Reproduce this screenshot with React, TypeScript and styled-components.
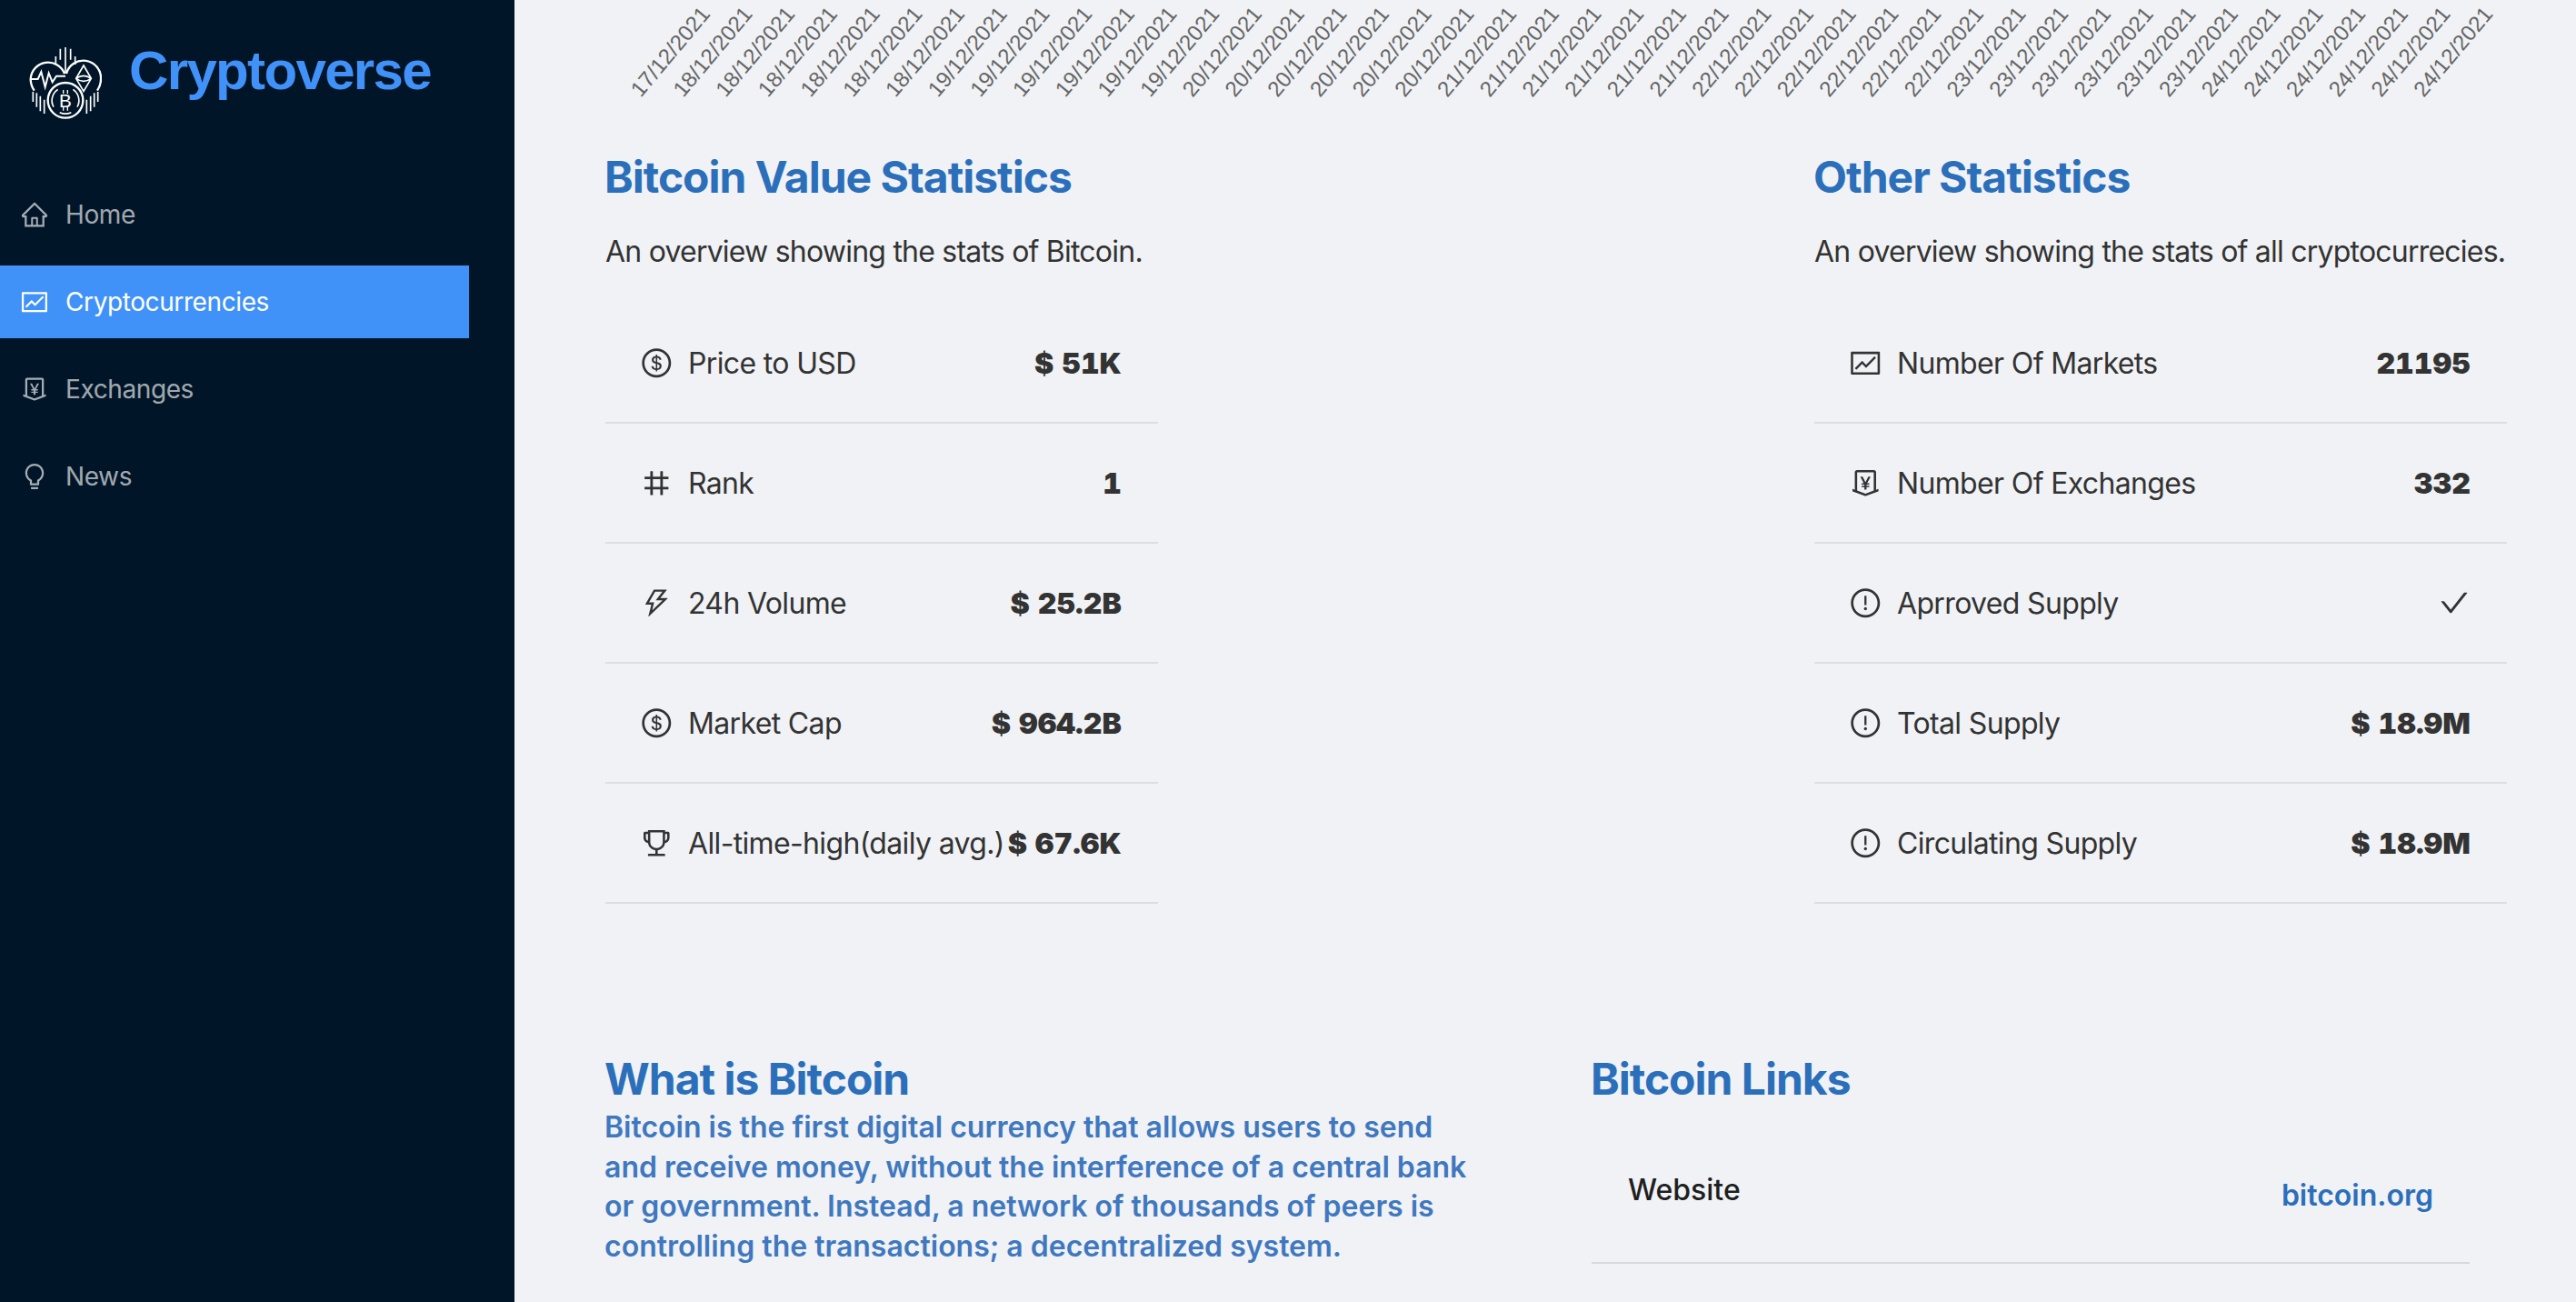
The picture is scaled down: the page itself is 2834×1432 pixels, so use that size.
import React from "react";
import styled, { createGlobalStyle } from "styled-components";
import {
  AiOutlineBulb,
  AiOutlineCheck,
  AiOutlineDollarCircle,
  AiOutlineExclamationCircle,
  AiOutlineFund,
  AiOutlineHome,
  AiOutlineMoneyCollect,
  AiOutlineNumber,
  AiOutlineThunderbolt,
  AiOutlineTrophy,
} from "react-icons/ai";

const GlobalStyle = createGlobalStyle`
  html, body {
    margin: 0;
    height: 100%;
    overflow: hidden;
    background: #f0f2f5;
  }
  * {
    box-sizing: border-box;
  }
`;

const Layout = styled.div`
  display: flex;
  width: 2834px;
  height: 1432px;
  overflow: hidden;
  font-family: Inter, "Liberation Sans", sans-serif;
`;

const Sidebar = styled.aside`
  flex: 0 0 566px;
  background: #011528;
`;

const Brand = styled.div`
  display: flex;
  align-items: flex-start;
  height: 196px;
  padding: 52px 0 0 32px;
  gap: 30px;
`;

const BrandName = styled.div`
  font-family: "Liberation Sans", Arial, sans-serif;
  font-size: 60px;
  font-weight: 700;
  line-height: 52px;
  color: #4092f9;
  letter-spacing: -1.65px;
`;

const Nav = styled.nav`
  display: flex;
  flex-direction: column;
  gap: 16px;
  width: 516px;
`;

const NavItem = styled.div<{ $active?: boolean }>`
  display: flex;
  align-items: center;
  gap: 20px;
  height: 80px;
  padding-left: 24px;
  font-size: 28px;
  letter-spacing: -0.4px;
  color: ${({ $active }) => ($active ? "#fff" : "rgba(255, 255, 255, 0.65)")};
  background: ${({ $active }) => ($active ? "#4092f9" : "transparent")};
`;

const IconSlot = styled.span<{ $size: number }>`
  display: flex;
  flex: none;
  align-items: center;
  justify-content: center;
  width: ${({ $size }) => $size}px;
  height: ${({ $size }) => $size}px;
  svg {
    flex: none;
    width: ${({ $size }) => ($size * 1024) / 896}px;
    height: ${({ $size }) => ($size * 1024) / 896}px;
  }
`;

const Main = styled.main`
  flex: 1;
  min-width: 0;
`;

const ChartAxis = styled.svg`
  display: block;
  width: 100%;
  height: 166px;
`;

const AxisLabel = styled.text`
  font-family: "Liberation Sans", Arial, sans-serif;
  font-size: 24px;
  fill: #666;
`;

const Content = styled.div`
  padding-left: 100px;
`;

const StatsRow = styled.section`
  display: flex;
  justify-content: space-between;
  width: 2092px;
`;

const StatsColumn = styled.div<{ $width: number }>`
  width: ${({ $width }) => $width}px;
`;

const Heading = styled.h3`
  margin: 0 0 0 -1px;
  font-size: 48px;
  font-weight: 700;
  line-height: 58px;
  letter-spacing: -1px;
  color: #2b6fbb;
`;

const Intro = styled.p`
  margin: 31px 0 35px;
  font-size: 32px;
  line-height: 44px;
  letter-spacing: -0.78px;
  white-space: nowrap;
  color: #333;
`;

const StatRow = styled.div`
  display: flex;
  align-items: center;
  justify-content: space-between;
  height: 132px;
  padding: 0 40px;
  border-bottom: 2px solid #dcdee0;
  font-size: 32px;
  letter-spacing: -0.65px;
  color: #333;
`;

const StatName = styled.div`
  display: flex;
  align-items: center;
  gap: 19px;
  white-space: nowrap;
`;

const StatValue = styled.div`
  display: flex;
  align-items: center;
  font-weight: 900;
  font-variant-numeric: tabular-nums;
  letter-spacing: 0.1px;
  white-space: nowrap;
`;

const InfoRow = styled.section`
  display: flex;
  margin-top: 164px;
`;

const AboutColumn = styled.div`
  flex: 0 0 1085px;
`;

const AboutText = styled.p`
  width: 960px;
  margin: 2px 0 0 -1px;
  font-size: 32px;
  font-weight: 600;
  line-height: 43.5px;
  color: #3f78bf;
`;

const LinksColumn = styled.div`
  width: 966px;
`;

const LinkRow = styled.div`
  display: flex;
  justify-content: space-between;
  height: 144px;
  margin-top: 30px;
  padding: 41px 40px 0;
  border-bottom: 2px solid #d6d8da;
`;

const LinkName = styled.span`
  font-size: 32px;
  font-weight: 500;
  line-height: 44px;
  color: #1f1f1f;
`;

const LinkValue = styled.a`
  margin-top: 6px;
  font-size: 32px;
  font-weight: 600;
  line-height: 44px;
  color: #2b6fbb;
  text-decoration: none;
`;

const days: [number, number][] = [
  [17, 1],
  [18, 6],
  [19, 6],
  [20, 6],
  [21, 6],
  [22, 6],
  [23, 6],
  [24, 6],
];
const axisDates = days.flatMap(([day, count]) =>
  Array.from({ length: count }, () => `${day}/12/2021`)
);

const navItems = [
  { label: "Home", icon: <AiOutlineHome /> },
  { label: "Cryptocurrencies", icon: <AiOutlineFund />, active: true },
  { label: "Exchanges", icon: <AiOutlineMoneyCollect /> },
  { label: "News", icon: <AiOutlineBulb /> },
];

const bitcoinStats = [
  { name: "Price to USD", value: "$ 51K", icon: <AiOutlineDollarCircle /> },
  { name: "Rank", value: "1", icon: <AiOutlineNumber /> },
  { name: "24h Volume", value: "$ 25.2B", icon: <AiOutlineThunderbolt /> },
  { name: "Market Cap", value: "$ 964.2B", icon: <AiOutlineDollarCircle /> },
  { name: "All-time-high(daily avg.)", value: "$ 67.6K", icon: <AiOutlineTrophy /> },
];

const otherStats = [
  { name: "Number Of Markets", value: "21195", icon: <AiOutlineFund /> },
  { name: "Number Of Exchanges", value: "332", icon: <AiOutlineMoneyCollect /> },
  { name: "Aprroved Supply", value: <AiOutlineCheck size={36} />, icon: <AiOutlineExclamationCircle /> },
  { name: "Total Supply", value: "$ 18.9M", icon: <AiOutlineExclamationCircle /> },
  { name: "Circulating Supply", value: "$ 18.9M", icon: <AiOutlineExclamationCircle /> },
];

const Logo = () => (
  <svg width="80" height="80" viewBox="95 65 240 240" fill="none" stroke="#fff" strokeWidth="7">
    <path d="M212 152A58 58 0 0 0 100 170Q100 190 112 208" />
    <path d="M218 152A58 58 0 0 1 332 170Q332 190 320 208" />
    <circle cx="215" cy="240" r="58" />
    <path d="M176 262A44 44 0 0 1 190 204M240 204A44 44 0 0 1 254 262M196 280A44 44 0 0 0 234 280" strokeWidth="5" />
    <path d="M100 170H124L135 146L148 196L160 150L172 180L185 160H215" strokeWidth="6" />
    <path d="M275 125L300 168L275 210L250 168ZM250 168Q275 150 300 168M250 168Q275 186 300 168" strokeWidth="5" />
    <path d="M198 70V106M215 65V152M232 70V106M183 95V122M247 95V122" strokeWidth="5" />
    <path d="M108 212V245M120 216V262M132 226V276M145 238V284M285 238V284M298 226V276M310 216V262M322 212V245" strokeWidth="5" />
    <text x="215" y="262" fill="#fff" stroke="none" fontFamily="Liberation Sans" fontSize="62" textAnchor="middle">
      B
    </text>
    <path d="M208 206V218M222 206V218M208 262V274M222 262V274" strokeWidth="4" />
  </svg>
);

const App = () => {
  return (
    <>
      <GlobalStyle />
      <Layout>
        <Sidebar>
          <Brand>
            <Logo />
            <BrandName>Cryptoverse</BrandName>
          </Brand>
          <Nav>
            {navItems.map((item) => (
              <NavItem key={item.label} $active={item.active}>
                <IconSlot $size={28}>{item.icon}</IconSlot>
                {item.label}
              </NavItem>
            ))}
          </Nav>
        </Sidebar>
        <Main>
          <ChartAxis>
            {axisDates.map((date, i) => {
              const x = 139 + i * 46.7;
              return (
                <AxisLabel key={i} x={x} y={108} transform={`rotate(-50 ${x} 108)`}>
                  {date}
                </AxisLabel>
              );
            })}
          </ChartAxis>
          <Content>
            <StatsRow>
              <StatsColumn $width={608}>
                <Heading>Bitcoin Value Statistics</Heading>
                <Intro>An overview showing the stats of Bitcoin.</Intro>
                {bitcoinStats.map((stat) => (
                  <StatRow key={stat.name}>
                    <StatName>
                      <IconSlot $size={32}>{stat.icon}</IconSlot>
                      {stat.name}
                    </StatName>
                    <StatValue>{stat.value}</StatValue>
                  </StatRow>
                ))}
              </StatsColumn>
              <StatsColumn $width={762}>
                <Heading>Other Statistics</Heading>
                <Intro>An overview showing the stats of all cryptocurrecies.</Intro>
                {otherStats.map((stat) => (
                  <StatRow key={stat.name}>
                    <StatName>
                      <IconSlot $size={32}>{stat.icon}</IconSlot>
                      {stat.name}
                    </StatName>
                    <StatValue>{stat.value}</StatValue>
                  </StatRow>
                ))}
              </StatsColumn>
            </StatsRow>
            <InfoRow>
              <AboutColumn>
                <Heading>What is Bitcoin</Heading>
                <AboutText>
                  Bitcoin is the first digital currency that allows users to send and receive
                  money, without the interference of a central bank or government. Instead, a
                  network of thousands of peers is controlling the transactions; a decentralized
                  system.
                </AboutText>
              </AboutColumn>
              <LinksColumn>
                <Heading>Bitcoin Links</Heading>
                <LinkRow>
                  <LinkName>Website</LinkName>
                  <LinkValue>bitcoin.org</LinkValue>
                </LinkRow>
              </LinksColumn>
            </InfoRow>
          </Content>
        </Main>
      </Layout>
    </>
  );
};

export default App;
